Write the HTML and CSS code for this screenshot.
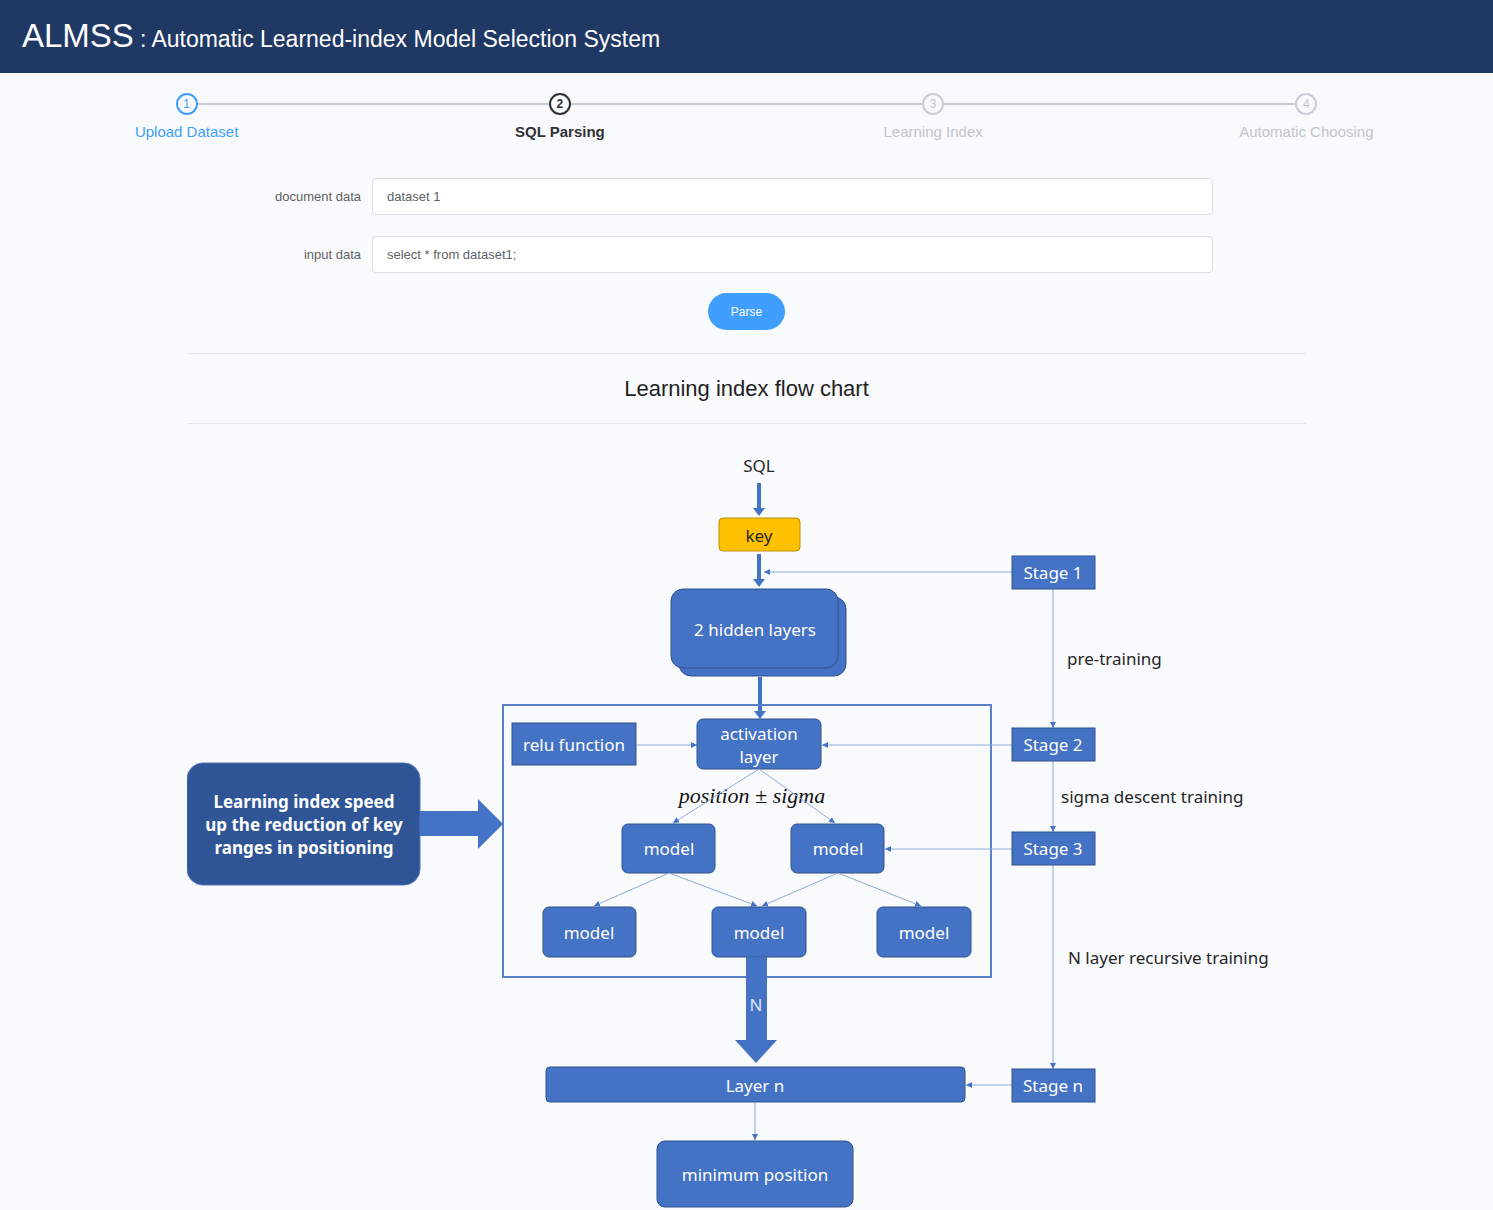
FILE: index.html
```html
<!DOCTYPE html>
<html lang="en">
<head>
    <meta charset="UTF-8">
    <meta name="viewport" content="width=device-width, initial-scale=1.0">
    <title>ALMSS</title>
    <link rel="stylesheet" href="styles.css">
</head>
<body>
    <header class="topbar">
        <span class="brand">ALMSS</span>
        <span class="subtitle">: Automatic Learned-index Model Selection System</span>
    </header>

    <div class="steps">
        <div class="step done">
            <div class="step-line"></div>
            <div class="step-icon">1</div>
            <div class="step-title">Upload Dataset</div>
        </div>
        <div class="step active">
            <div class="step-line"></div>
            <div class="step-icon">2</div>
            <div class="step-title">SQL Parsing</div>
        </div>
        <div class="step">
            <div class="step-line"></div>
            <div class="step-icon">3</div>
            <div class="step-title">Learning Index</div>
        </div>
        <div class="step">
            <div class="step-icon">4</div>
            <div class="step-title">Automatic Choosing</div>
        </div>
    </div>

    <div class="content">
        <div class="form-row">
            <label class="form-label">document data</label>
            <input class="form-input" type="text" value="dataset 1">
        </div>
        <div class="form-row">
            <label class="form-label">input data</label>
            <input class="form-input" type="text" value="select * from dataset1;">
        </div>
        <div class="actions">
            <button class="btn">Parse</button>
        </div>

        <div class="chart-title">Learning index flow chart</div>

        <svg class="flow" viewBox="187 424 1119 786" width="1119" height="786">
            <defs>
                <marker id="tip" viewBox="0 0 6 6" refX="6" refY="3" markerWidth="6" markerHeight="6" markerUnits="userSpaceOnUse" orient="auto">
                    <path d="M0,0 L6,3 L0,6 z" fill="#4472c4"/>
                </marker>
            </defs>

            <!-- input -->
            <text class="plain" x="759" y="465">SQL</text>
            <path class="bar" d="M759 483 V509"/>
            <path class="head" d="M753 508 H765 L759 516 Z"/>
            <rect class="key" x="719" y="518" width="81" height="33" rx="4"/>
            <text class="plain" x="759" y="535" font-size="18">key</text>
            <path class="bar" d="M759 554 V580"/>
            <path class="head" d="M753 579 H765 L759 587 Z"/>

            <!-- hidden layers -->
            <rect class="box" x="679" y="597" width="167" height="79" rx="12"/>
            <rect class="box" x="671" y="589" width="167" height="79" rx="12"/>
            <text x="755" y="629">2 hidden layers</text>
            <path class="bar" d="M760 677 V712"/>
            <path class="head" d="M754 711 H766 L760 719 Z"/>

            <!-- model group -->
            <rect class="frame" x="503" y="705" width="488" height="272"/>
            <rect class="box" x="512" y="723" width="124" height="42"/>
            <text x="574" y="744">relu function</text>
            <line class="thin" x1="636" y1="745" x2="697" y2="745" marker-end="url(#tip)"/>
            <rect class="box" x="697" y="719" width="124" height="50" rx="6"/>
            <text x="759" y="733">activation</text>
            <text x="759" y="756">layer</text>
            <text class="math" x="752" y="795">position ± sigma</text>

            <line class="thin" x1="759" y1="769" x2="673" y2="823" marker-end="url(#tip)"/>
            <line class="thin" x1="759" y1="769" x2="835" y2="823" marker-end="url(#tip)"/>
            <rect class="box" x="622" y="824" width="93" height="49" rx="6"/>
            <text x="669" y="848">model</text>
            <rect class="box" x="791" y="824" width="93" height="49" rx="6"/>
            <text x="838" y="848">model</text>

            <line class="thin" x1="669" y1="873" x2="594" y2="906" marker-end="url(#tip)"/>
            <line class="thin" x1="669" y1="873" x2="757" y2="906" marker-end="url(#tip)"/>
            <line class="thin" x1="838" y1="873" x2="762" y2="906" marker-end="url(#tip)"/>
            <line class="thin" x1="838" y1="873" x2="921" y2="906" marker-end="url(#tip)"/>
            <rect class="box" x="543" y="907" width="93" height="50" rx="6"/>
            <text x="589" y="932">model</text>
            <rect class="box" x="712" y="907" width="94" height="50" rx="6"/>
            <text x="759" y="932">model</text>
            <rect class="box" x="877" y="907" width="94" height="50" rx="6"/>
            <text x="924" y="932">model</text>

            <!-- N layers -->
            <path class="head" d="M746 957 H767 V1040 H777 L756 1063 L735 1040 H746 Z"/>
            <text class="light" x="756" y="1004">N</text>
            <rect class="box" x="546" y="1067" width="419" height="35" rx="4"/>
            <text x="755" y="1085">Layer n</text>
            <line class="thin" x1="755" y1="1102" x2="755" y2="1140" marker-end="url(#tip)"/>
            <rect class="box" x="657" y="1141" width="196" height="66" rx="8"/>
            <text x="755" y="1174">minimum position</text>

            <!-- stages -->
            <line class="thin" x1="1012" y1="572" x2="764" y2="572" marker-end="url(#tip)"/>
            <line class="thin" x1="1012" y1="745" x2="822" y2="745" marker-end="url(#tip)"/>
            <line class="thin" x1="1012" y1="849" x2="885" y2="849" marker-end="url(#tip)"/>
            <line class="thin" x1="1012" y1="1085" x2="966" y2="1085" marker-end="url(#tip)"/>
            <line class="thin" x1="1053" y1="589" x2="1053" y2="728" marker-end="url(#tip)"/>
            <line class="thin" x1="1053" y1="761" x2="1053" y2="832" marker-end="url(#tip)"/>
            <line class="thin" x1="1053" y1="865" x2="1053" y2="1069" marker-end="url(#tip)"/>

            <rect class="stage" x="1012" y="556" width="83" height="33"/>
            <text x="1053" y="572">Stage 1</text>
            <rect class="stage" x="1012" y="728" width="83" height="33"/>
            <text x="1053" y="744">Stage 2</text>
            <rect class="stage" x="1012" y="832" width="83" height="33"/>
            <text x="1053" y="848">Stage 3</text>
            <rect class="stage" x="1012" y="1069" width="83" height="33"/>
            <text x="1053" y="1085">Stage n</text>

            <text class="note" x="1067" y="658">pre-training</text>
            <text class="note" x="1061" y="796">sigma descent training</text>
            <text class="note" x="1068" y="957">N layer recursive training</text>

            <!-- summary -->
            <rect class="summary" x="187" y="763" width="233" height="122" rx="16"/>
            <text class="bold" x="304" y="801">Learning index speed</text>
            <text class="bold" x="304" y="824">up the reduction of key</text>
            <text class="bold" x="304" y="847">ranges in positioning</text>
            <path class="head" d="M420 811 H478 V799 L503 824 L478 849 V836 H420 Z"/>
        </svg>
    </div>
</body>
</html>
```

FILE: styles.css
```css
/* Page */
body {
    margin: 0;
    background-color: #f9fafc;
    font-family: "Liberation Sans", Arial, sans-serif;
}

/* Top bar */
.topbar {
    height: 73px;
    box-sizing: border-box;
    padding: 16px 22px 0;
    background-color: #203864;
    color: #fff;
    display: flex;
    align-items: baseline;
}

.brand {
    font-size: 33px;
    line-height: 40px;
}

.subtitle {
    font-size: 23px;
    margin-left: 6px;
}

/* Steps */
.steps {
    display: grid;
    grid-template-columns: repeat(4, 1fr);
    padding-top: 20px;
}

.step {
    position: relative;
    display: flex;
    flex-direction: column;
    align-items: center;
    color: #c0c4cc;
}

.step-line {
    position: absolute;
    top: 10px;
    left: calc(50% + 11px);
    width: calc(100% - 22px);
    height: 2px;
    background-color: #c8ccd3;
}

.step-icon {
    width: 22px;
    height: 22px;
    box-sizing: border-box;
    border: 2px solid #c8ccd3;
    border-radius: 50%;
    display: flex;
    align-items: center;
    justify-content: center;
    font-size: 12px;
}

.step-title {
    margin-top: 7px;
    font-size: 15px;
    line-height: 20px;
}

.step.done {
    color: #409eff;
}

.step.done .step-icon {
    border-color: #409eff;
}

.step.active {
    color: #303133;
    font-weight: bold;
}

.step.active .step-icon {
    border-color: #303133;
}

/* Form */
.content {
    width: 1119px;
    margin: 36px auto 0;
}

.form-row {
    display: grid;
    grid-template-columns: 185px 841px;
    align-items: center;
    margin-bottom: 21px;
}

.form-label {
    text-align: right;
    padding-right: 11px;
    font-size: 13px;
    color: #606266;
}

.form-input {
    width: 100%;
    height: 37px;
    box-sizing: border-box;
    padding: 0 14px;
    border: 1px solid #dcdfe6;
    border-radius: 4px;
    background-color: #fff;
    font-family: "Liberation Sans", Arial, sans-serif;
    font-size: 13px;
    color: #606266;
}

.actions {
    display: flex;
    justify-content: center;
    margin-top: -1px;
}

.btn {
    width: 77px;
    height: 37px;
    border: none;
    border-radius: 19px;
    background-color: #409eff;
    color: #fff;
    font-family: "Liberation Sans", Arial, sans-serif;
    font-size: 12px;
}

.chart-title {
    margin-top: 23px;
    padding: 23px 0 22px;
    border-top: 1px solid #e4e7ed;
    border-bottom: 1px solid #e4e7ed;
    text-align: center;
    font-size: 22px;
    line-height: 24px;
    color: #1f1f1f;
}

/* Flow chart */
.flow {
    display: block;
}

.flow text {
    font-family: "Noto Sans", sans-serif;
    font-size: 17px;
    text-anchor: middle;
    dominant-baseline: central;
    fill: #fff;
}

.flow .plain {
    fill: #262626;
}

.flow .note {
    text-anchor: start;
    fill: #262626;
}

.flow .light {
    fill: #dde6f5;
}

.flow .bold {
    font-weight: bold;
}

.flow .math {
    font-family: "Liberation Serif", serif;
    font-style: italic;
    font-size: 22px;
    fill: #111;
}

.box,
.stage {
    fill: #4472c4;
    stroke: #2f528f;
    stroke-width: 1;
}

.key {
    fill: #ffc000;
    stroke: #bf9000;
    stroke-width: 1;
}

.summary {
    fill: #2f5597;
    stroke: #4a74bd;
    stroke-width: 1;
}

.frame {
    fill: none;
    stroke: #5b80c8;
    stroke-width: 2;
}

.bar {
    fill: none;
    stroke: #4472c4;
    stroke-width: 4;
}

.head {
    fill: #4472c4;
}

.thin {
    stroke: #8eaadb;
    stroke-width: 1;
}
```
